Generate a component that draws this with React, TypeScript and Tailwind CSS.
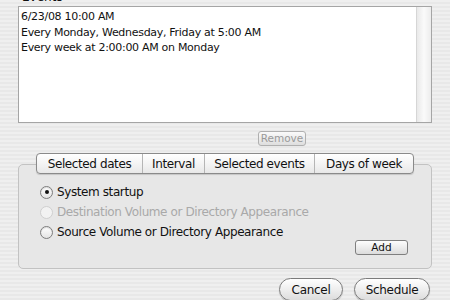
import React from "react";

const tabs = ["Selected dates", "Interval", "Selected events", "Days of week"];
const tabWidths = ["w-[105px]", "w-[62px]", "w-[110px]", "w-[99px]"];

function Radio({ label, checked, disabled }: { label: string; checked?: boolean; disabled?: boolean }) {
  return (
    <div className="flex h-[20px] items-center gap-[4px]">
      <div
        className={
          "flex h-[13px] w-[13px] items-center justify-center rounded-full border " +
          (disabled
            ? "border-[#cfcfcf] bg-[#f2f2f2]"
            : "border-[#7d7d7d] bg-[linear-gradient(to_bottom,#ffffff,#e4e4e4)] shadow-[inset_0_1px_1px_rgba(0,0,0,0.15)]")
        }
      >
        {checked && <div className="h-[4px] w-[4px] rounded-full bg-[#111]" />}
      </div>
      <span className={"text-[12px] tracking-[-0.4px] " + (disabled ? "text-[#a9a9a9]" : "text-[#111]")}>{label}</span>
    </div>
  );
}

export default function App() {
  return (
    <div className="h-[300px] w-[450px] overflow-hidden bg-[repeating-linear-gradient(to_bottom,#efefef_0px,#efefef_2px,#e8e8e8_2px,#e8e8e8_4px)] px-[18px] font-['DejaVu_Sans',sans-serif] text-[#111]">
      {/* Events label (cut off at top) */}
      <div className="mt-[-10px] h-[16px] pl-[4px] text-[12px] leading-[14px]">Events</div>

      {/* Events list */}
      <div className="flex h-[117px] border border-[#a5a5a5] bg-white">
        <div className="flex-1 pl-[2px] pt-[2px] text-[11px] leading-[15.5px] tracking-[-0.3px]">
          <div>6/23/08 10:00 AM</div>
          <div>Every Monday, Wednesday, Friday at 5:00 AM</div>
          <div>Every week at 2:00:00 AM on Monday</div>
        </div>
        <div className="w-[15px] border-l border-[#d6d6d6] bg-[linear-gradient(to_right,#e9e9e9,#fafafa_50%,#ececec)]" />
      </div>

      {/* Remove */}
      <div className="mt-[8px] flex pl-[240px]">
        <div className="flex h-[15px] w-[48px] items-center justify-center rounded-[3px] border border-[#b0b0b0] bg-[linear-gradient(to_bottom,#fafafa,#dedede)] text-[10.5px] text-[#9a9a9a]">
          Remove
        </div>
      </div>

      {/* Tab view */}
      <div className="mt-[7px] flex flex-col">
        <div className="relative z-10 flex justify-center">
          <div className="flex h-[21px] rounded-[4px] border border-[#8a8a8a] bg-[linear-gradient(to_bottom,#ffffff,#f4f4f4_50%,#e8e8e8)] shadow-[0_1px_1px_rgba(0,0,0,0.15)]">
            {tabs.map((t, i) => (
              <div
                key={t}
                className={
                  "flex items-center justify-center text-[12px] tracking-[-0.4px] " +
                  tabWidths[i] +
                  (i > 0 ? " border-l border-[#b5b5b5]" : "")
                }
              >
                {t}
              </div>
            ))}
          </div>
        </div>
        <div className="mt-[-10px] flex h-[105px] flex-col rounded-[5px] border border-[#c2c2c2] bg-[#e7e7e7] pl-[21px] pr-[23px] pt-[17px]">
          <Radio label="System startup" checked />
          <Radio label="Destination Volume or Directory Appearance" disabled />
          <Radio label="Source Volume or Directory Appearance" />
          <div className="flex justify-end">
            <div className="mt-[-2px] flex h-[15px] w-[53px] items-center justify-center rounded-[3px] border border-[#7f7f7f] bg-[linear-gradient(to_bottom,#fdfdfd,#dcdcdc)] text-[10.5px]">
              Add
            </div>
          </div>
        </div>
      </div>

      {/* Bottom buttons */}
      <div className="mt-[9px] flex justify-end gap-[11px] pr-[2px]">
        <div className="flex h-[23px] w-[64px] items-center justify-center rounded-full border border-[#7c7c7c] bg-[linear-gradient(to_bottom,#ffffff,#eeeeee_50%,#dcdcdc)] text-[12px] tracking-[-0.3px] shadow-[0_1px_1px_rgba(0,0,0,0.2)]">
          Cancel
        </div>
        <div className="flex h-[23px] w-[76px] items-center justify-center rounded-full border border-[#7c7c7c] bg-[linear-gradient(to_bottom,#ffffff,#eeeeee_50%,#dcdcdc)] text-[12px] tracking-[-0.3px] shadow-[0_1px_1px_rgba(0,0,0,0.2)]">
          Schedule
        </div>
      </div>
    </div>
  );
}
